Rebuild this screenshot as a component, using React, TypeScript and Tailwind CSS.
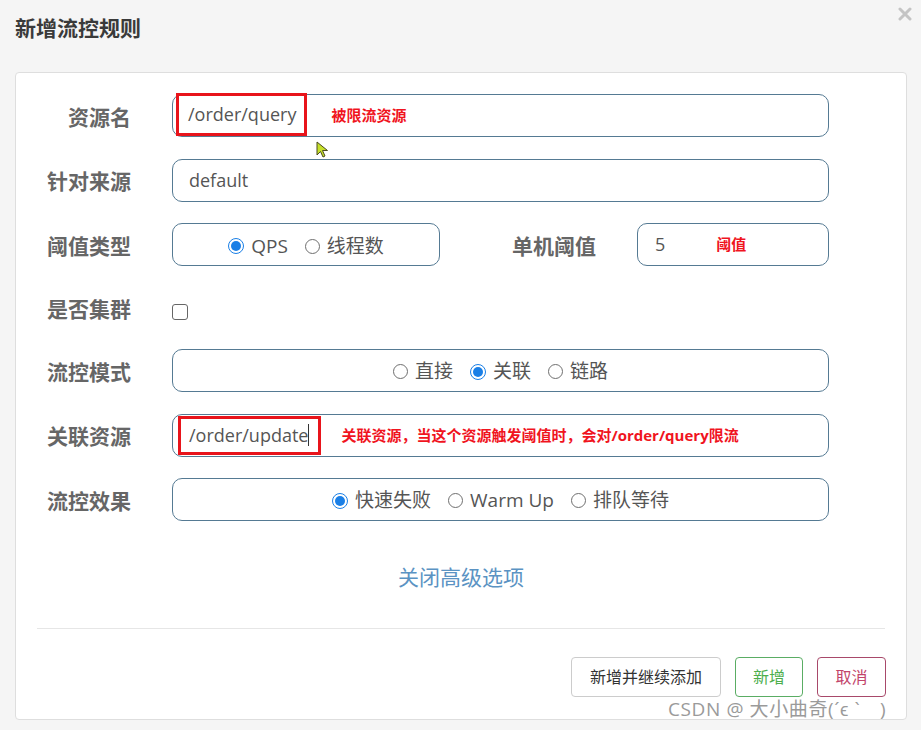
const sans = 'font-["Open_Sans","Noto_Sans_CJK_SC",sans-serif]'

function Radio({ label, checked }: { label: string; checked?: boolean }) {
  return (
    <span className="flex items-center gap-[7px]">
      {checked ? (
        <span className="w-[16px] h-[16px] rounded-full border-[1.5px] border-[#1a7fe6] flex items-center justify-center">
          <span className="w-[10px] h-[10px] rounded-full bg-[#1a7fe6]" />
        </span>
      ) : (
        <span className="w-[15px] h-[15px] rounded-full border border-[#6f6f6f] bg-white" />
      )}
      <span className="text-[19px] text-[#555]">{label}</span>
    </span>
  )
}

function Row({ label, h = 'h-[43px]', children }: { label: string; h?: string; children: React.ReactNode }) {
  return (
    <div className={`flex items-center ${h}`}>
      <div className="w-[115px] shrink-0 pt-[4px] text-right text-[21px] font-bold text-[#666]">{label}</div>
      <div className="ml-[41px] flex-1 flex items-center h-full">{children}</div>
    </div>
  )
}

const box = 'h-full rounded-[10px] border border-[#557a93] bg-white flex items-center'

export default function App() {
  return (
    <div className={`relative w-[921px] h-[730px] bg-[#f5f5f5] overflow-hidden ${sans}`}>
      {/* Header */}
      <div className="h-[72px] px-[15px] pt-[12px] flex items-start justify-between">
        <h1 className="text-[21px] font-bold text-[#3a3a3a] leading-[32px]">新增流控规则</h1>
        <svg width="14" height="14" viewBox="0 0 14 14" className="mt-[-5px] mr-[-6px]">
          <path d="M2 2 L12 12 M12 2 L2 12" stroke="#c4c4c4" strokeWidth="3" strokeLinecap="round" />
        </svg>
      </div>

      {/* Card */}
      <div className="ml-[15px] w-[892px] h-[648px] bg-white border border-[#dedede] rounded-[4px] pt-[21px]">
        <div className="pr-[77px] flex flex-col gap-[21.5px]">
          <Row label="资源名">
            <div className={`${box} flex-1 pl-[3px]`}>
              <div className="h-[43px] -mt-[2px] border-[3px] border-[#e8141b] pl-[9px] pr-[8px] flex items-center text-[18px] text-[#555]">
                /order/query
              </div>
              <span className="ml-[24px] text-[15px] font-bold text-[#f0141e]">被限流资源</span>
            </div>
          </Row>

          <Row label="针对来源">
            <div className={`${box} flex-1 px-[16px] text-[18px] text-[#555]`}>default</div>
          </Row>

          <Row label="阈值类型">
            <div className={`${box} w-[268px] justify-center gap-[17px] pt-[3px]`}>
              <Radio label="QPS" checked />
              <Radio label="线程数" />
            </div>
            <div className="w-[156px] text-right text-[21px] font-bold text-[#666] pt-[5px]">单机阈值</div>
            <div className={`${box} ml-[41px] flex-1 pl-[17px]`}>
              <span className="text-[18px] text-[#555]">5</span>
              <span className="ml-[51px] text-[15px] font-bold text-[#f0141e]">阈值</span>
            </div>
          </Row>

          <Row label="是否集群" h="h-[40px]">
            <span className="mt-[9px] w-[16px] h-[16px] rounded-[3px] border-[1.5px] border-[#666] bg-white" />
          </Row>

          <Row label="流控模式">
            <div className={`${box} flex-1 justify-center gap-[17px] pt-[2px]`}>
              <Radio label="直接" />
              <Radio label="关联" checked />
              <Radio label="链路" />
            </div>
          </Row>

          <Row label="关联资源">
            <div className={`${box} flex-1 pl-[5px]`}>
              <div className="h-[39px] border-[3px] border-[#e8141b] pl-[8px] pr-[9px] flex items-center text-[18px] text-[#555]">
                /order/update<span className="w-px h-[22px] bg-[#333]" />
              </div>
              <span className="ml-[20px] text-[15px] font-bold text-[#f0141e]">
                关联资源，当这个资源触发阈值时，会对/order/query限流
              </span>
            </div>
          </Row>

          <Row label="流控效果">
            <div className={`${box} flex-1 justify-center gap-[17px] pt-[2px]`}>
              <Radio label="快速失败" checked />
              <Radio label="Warm Up" />
              <Radio label="排队等待" />
            </div>
          </Row>
        </div>

        <div className="mt-[36px] h-[42px] flex items-center justify-center">
          <span className="text-[21px] text-[#5b93c3]">关闭高级选项</span>
        </div>

        <div className="mx-[21px] mt-[29px] border-t border-[#e6e6e6]" />

        <div className="mt-[28px] mr-[20px] flex justify-end gap-[14px]">
          <button className="h-[40px] px-[18px] rounded-[4px] border border-[#cccccc] bg-white text-[16px] text-[#333]">
            新增并继续添加
          </button>
          <button className="h-[40px] w-[68px] rounded-[4px] border border-[#5aad64] bg-white text-[16px] text-[#4cae4c]">
            新增
          </button>
          <button className="h-[40px] w-[69px] rounded-[4px] border border-[#a8496a] bg-white text-[16px] text-[#c2446a]">
            取消
          </button>
        </div>
      </div>

      {/* mouse cursor */}
      <svg width="14" height="18" viewBox="0 0 14 18" className="absolute left-[316px] top-[141px]">
        <path d="M1 1 L1 14 L4.5 10.5 L7 16 L9 15 L6.5 9.5 L11.5 9.5 Z" fill="#c6e02a" stroke="#4a4a20" strokeWidth="1" strokeLinejoin="round" />
      </svg>

      {/* watermark */}
      <div className="absolute left-[668px] top-[696px] text-[19px] leading-[26px] tracking-[0.6px] text-[#9a9a9a] whitespace-pre">
        CSDN @ 大小曲奇(´ϵ ` <span className="ml-[14px]">)</span>
      </div>
    </div>
  )
}
